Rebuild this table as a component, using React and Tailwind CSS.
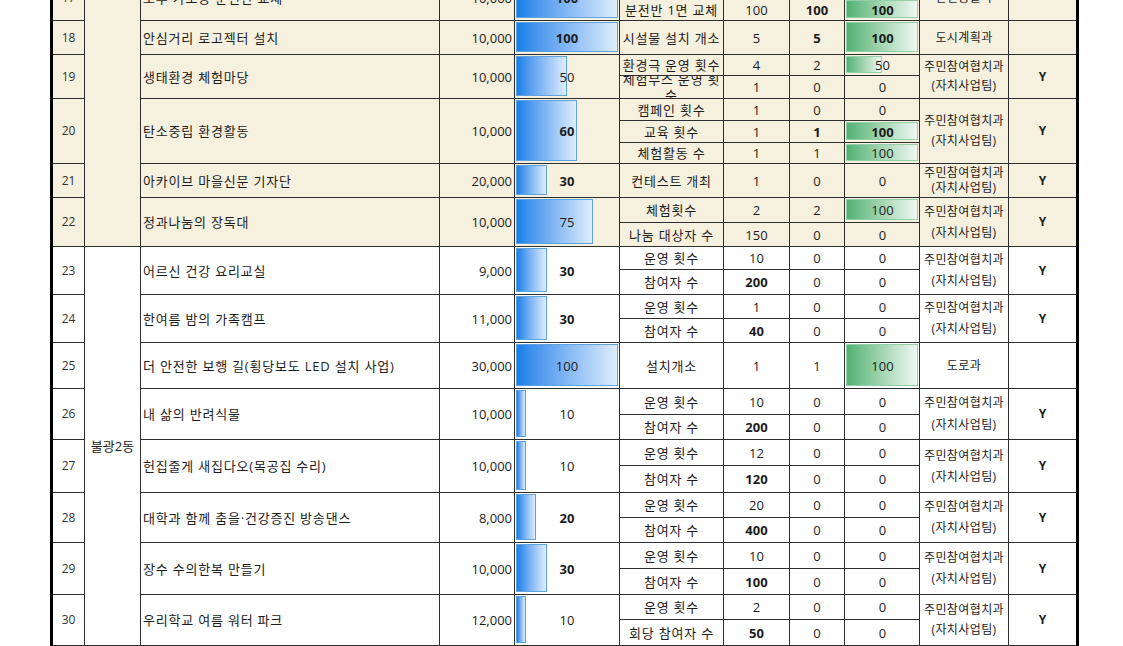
import React from 'react'

const LINE = 'border-[#2e2e2e]'
const DEPT2 = ['주민참여협치과', '(자치사업팀)']

const upperRows = [
  {
    no: 17, name: '노후 가로등 분전반 교체', budget: '10,000', pct: 100, pctBold: true, h: 'h-[45px]',
    subs: [
      { ind: '가로등 정비 개수', target: '10', actual: '10', rate: 100, h: 'h-[23px]' },
      { ind: '분전반 1면 교체', target: '100', actual: '100', actualBold: true, rate: 100, rateBold: true, h: 'h-[22px]' },
    ],
    dept: ['안전총괄과'], y: '',
  },
  {
    no: 18, name: '안심거리 로고젝터 설치', budget: '10,000', pct: 100, pctBold: true, h: 'h-[34px]',
    subs: [{ ind: '시설물 설치 개소', target: '5', actual: '5', actualBold: true, rate: 100, rateBold: true, h: 'h-[34px]' }],
    dept: ['도시계획과'], y: '',
  },
  {
    no: 19, name: '생태환경 체험마당', budget: '10,000', pct: 50, h: 'h-[44px]',
    subs: [
      { ind: '환경극 운영 횟수', target: '4', actual: '2', rate: 50, h: 'h-[21px]' },
      { ind: '체험부스 운영 횟수', target: '1', actual: '0', rate: 0, h: 'h-[23px]' },
    ],
    dept: DEPT2, gap: 'gap-[5px]', y: 'Y',
  },
  {
    no: 20, name: '탄소중립 환경활동', budget: '10,000', pct: 60, pctBold: true, h: 'h-[65px]',
    subs: [
      { ind: '캠페인 횟수', target: '1', actual: '0', rate: 0, h: 'h-[22px]' },
      { ind: '교육 횟수', target: '1', actual: '1', actualBold: true, rate: 100, rateBold: true, h: 'h-[22px]' },
      { ind: '체험활동 수', target: '1', actual: '1', rate: 100, h: 'h-[21px]' },
    ],
    dept: DEPT2, gap: 'gap-[6px]', y: 'Y',
  },
  {
    no: 21, name: '아카이브 마을신문 기자단', budget: '20,000', pct: 30, pctBold: true, h: 'h-[34px]',
    subs: [{ ind: '컨테스트 개최', target: '1', actual: '0', rate: 0, h: 'h-[34px]' }],
    dept: DEPT2, gap: 'gap-[1px]', y: 'Y',
  },
  {
    no: 22, name: '정과나눔의 장독대', budget: '10,000', pct: 75, h: 'h-[49px]',
    subs: [
      { ind: '체험횟수', target: '2', actual: '2', rate: 100, h: 'h-[25px]' },
      { ind: '나눔 대상자 수', target: '150', actual: '0', rate: 0, h: 'h-[24px]' },
    ],
    dept: DEPT2, gap: 'gap-[7px]', y: 'Y',
  },
]

const twoSubs = (count, people, h1, h2, label = '참여자 수') => [
  { ind: '운영 횟수', target: count, actual: '0', rate: 0, h: h1 },
  { ind: label, target: people, targetBold: true, actual: '0', rate: 0, h: h2 },
]

const lowerRows = [
  { no: 23, name: '어르신 건강 요리교실', budget: '9,000', pct: 30, pctBold: true, h: 'h-[48px]', subs: twoSubs('10', '200', 'h-[23px]', 'h-[25px]'), dept: DEPT2, gap: 'gap-[7px]', y: 'Y' },
  { no: 24, name: '한여름 밤의 가족캠프', budget: '11,000', pct: 30, pctBold: true, h: 'h-[48px]', subs: twoSubs('1', '40', 'h-[24px]', 'h-[24px]'), dept: DEPT2, gap: 'gap-[7px]', y: 'Y' },
  {
    no: 25, name: '더 안전한 보행 길(횡당보도 LED 설치 사업)', budget: '30,000', pct: 100, h: 'h-[46px]',
    subs: [{ ind: '설치개소', target: '1', actual: '1', rate: 100, h: 'h-[46px]' }],
    dept: ['도로과'], y: '',
  },
  { no: 26, name: '내 삶의 반려식물', budget: '10,000', pct: 10, h: 'h-[51px]', subs: twoSubs('10', '200', 'h-[26px]', 'h-[25px]'), dept: DEPT2, gap: 'gap-[8px]', y: 'Y' },
  { no: 27, name: '헌집줄게 새집다오(목공집 수리)', budget: '10,000', pct: 10, h: 'h-[53px]', subs: twoSubs('12', '120', 'h-[26px]', 'h-[27px]'), dept: DEPT2, gap: 'gap-[7px]', y: 'Y' },
  { no: 28, name: '대학과 함께 춤을·건강증진 방송댄스', budget: '8,000', pct: 20, pctBold: true, h: 'h-[50px]', subs: twoSubs('20', '400', 'h-[25px]', 'h-[25px]'), dept: DEPT2, gap: 'gap-[7px]', y: 'Y' },
  { no: 29, name: '장수 수의한복 만들기', budget: '10,000', pct: 30, pctBold: true, h: 'h-[52px]', subs: twoSubs('10', '100', 'h-[26px]', 'h-[26px]'), dept: DEPT2, gap: 'gap-[7px]', y: 'Y' },
  { no: 30, name: '우리학교 여름 워터 파크', budget: '12,000', pct: 10, h: 'h-[51px]', subs: twoSubs('2', '50', 'h-[25px]', 'h-[26px]', '회당 참여자 수'), dept: DEPT2, gap: 'gap-[6px]', y: 'Y' },
]

function BlueBar({ pct, bold }) {
  return (
    <div className={`w-[105px] shrink-0 grid border-r border-b ${LINE}`}>
      <div
        className="col-start-1 row-start-1 ml-[1px] mt-[1px] mb-[2px] border border-[#5ea2e2] bg-linear-to-r from-[#0a7fe8] to-[#deedfb]"
        style={{ width: `${Math.round(pct * 1.02)}px` }}
      />
      <div className={`col-start-1 row-start-1 flex items-center justify-center ${bold ? 'font-bold' : ''}`}>
        {pct}
      </div>
    </div>
  )
}

function RateCell({ rate, bold }) {
  return (
    <div className="w-[75px] shrink-0 grid">
      {rate > 0 && (
        <div
          className="col-start-1 row-start-1 ml-[1px] mt-[1px] mb-[2px] border border-[#93d0a8] bg-linear-to-r from-[#4fb374] to-[#eef7f1]"
          style={{ width: `${Math.round(rate * 0.72)}px` }}
        />
      )}
      <div className={`col-start-1 row-start-1 flex items-center justify-center ${bold ? 'font-bold' : ''}`}>
        {rate}
      </div>
    </div>
  )
}

function SubRow({ s }) {
  return (
    <div className={`flex border-b ${LINE} ${s.h}`}>
      <div className={`w-[104px] shrink-0 border-r ${LINE} flex items-center justify-center text-center overflow-hidden tracking-[0.8px]`}>
        <span>{s.ind}</span>
      </div>
      <div className={`w-[66px] shrink-0 border-r ${LINE} flex items-center justify-center ${s.targetBold ? 'font-bold' : ''}`}>
        {s.target}
      </div>
      <div className={`w-[55px] shrink-0 border-r ${LINE} flex items-center justify-center ${s.actualBold ? 'font-bold' : ''}`}>
        {s.actual}
      </div>
      <RateCell rate={s.rate} bold={s.rateBold} />
    </div>
  )
}

function ProjectRow({ r }) {
  return (
    <div className={`flex ${r.h}`}>
      <div className={`w-[299px] shrink-0 border-r border-b ${LINE} flex items-center pl-[2px] whitespace-nowrap overflow-hidden tracking-[0.8px]`}>
        {r.name}
      </div>
      <div className={`w-[75px] shrink-0 border-r border-b ${LINE} flex items-center justify-end pr-[2px]`}>
        {r.budget}
      </div>
      <BlueBar pct={r.pct} bold={r.pctBold} />
      <div className={`w-[300px] shrink-0 flex flex-col border-r ${LINE}`}>
        {r.subs.map((s, i) => (
          <SubRow key={i} s={s} />
        ))}
      </div>
      <div className={`w-[89px] shrink-0 border-r border-b ${LINE} flex flex-col items-center justify-center ${r.gap || ''} text-[12px] leading-[14px] tracking-[0.4px] whitespace-nowrap overflow-hidden`}>
        {r.dept.map((d) => (
          <span key={d}>{d}</span>
        ))}
      </div>
      <div className={`w-[67px] shrink-0 border-b ${LINE} flex items-center justify-center font-bold text-[12px]`}>
        {r.y}
      </div>
    </div>
  )
}

function Group({ dong, rows, bg }) {
  return (
    <div className={`flex ${bg}`}>
      <div className="w-[32px] shrink-0 flex flex-col">
        {rows.map((r) => (
          <div key={r.no} className={`${r.h} border-r border-b ${LINE} flex items-center justify-center text-[12px] text-[#333]`}>
            {r.no}
          </div>
        ))}
      </div>
      <div className={`w-[56px] shrink-0 border-r border-b ${LINE} flex items-center justify-center`}>
        {dong}
      </div>
      <div className="flex flex-col">
        {rows.map((r) => (
          <ProjectRow key={r.no} r={r} />
        ))}
      </div>
    </div>
  )
}

export default function App() {
  return (
    <div className="h-[646px] overflow-hidden bg-white">
      <div className="ml-[50px] -mt-[24px] w-[1029px] border-x-[3px] border-black text-[13px] leading-[16px] text-[#1c1c1c] font-['Open_Sans','Noto_Sans_CJK_KR',sans-serif]">
        <Group dong="" rows={upperRows} bg="bg-[#f6f0de]" />
        <Group dong="불광2동" rows={lowerRows} bg="bg-white" />
      </div>
    </div>
  )
}
